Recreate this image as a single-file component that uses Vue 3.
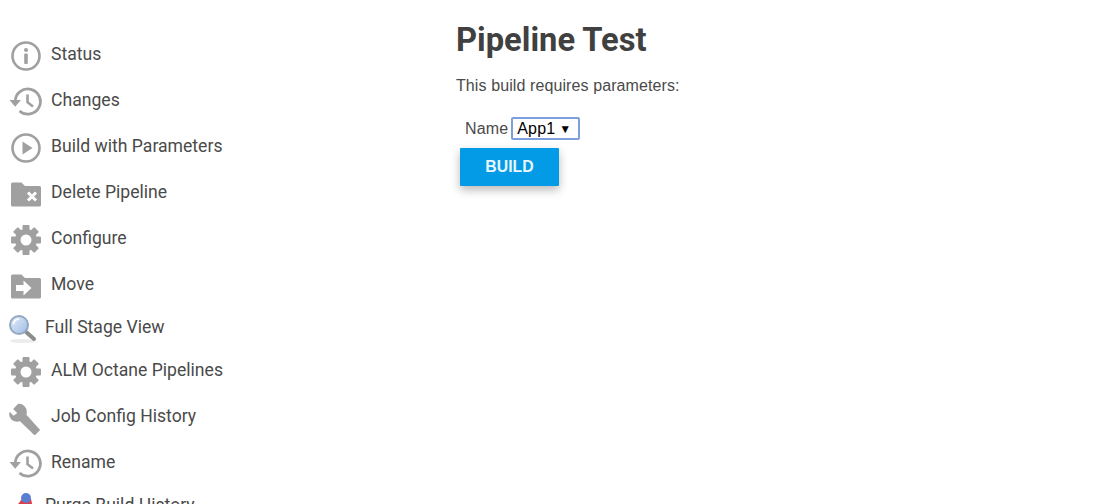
<template>
  <div class="page">
    <!-- sidebar -->
    <nav class="side">
      <a v-for="item in items" :key="item.label" class="task" :class="{ small: item.small }">
        <span class="ico">
          <svg v-if="item.icon === 'info'" viewBox="0 0 30 30" width="30" height="30">
            <circle cx="15" cy="15" r="13.5" fill="none" stroke="#a0a0a0" stroke-width="2.6" />
            <circle cx="15" cy="9" r="2" fill="#a0a0a0" />
            <rect x="13.2" y="12.5" width="3.6" height="10.5" rx="1" fill="#a0a0a0" />
          </svg>
          <svg v-else-if="item.icon === 'history'" class="over" viewBox="0 0 30 30" width="30" height="30">
            <path d="M4.2 14.5 A12.6 12.6 0 1 1 8.5 24" fill="none" stroke="#a0a0a0" stroke-width="2.8" />
            <path d="M-1.5 13 H10 L4.2 19.8 Z" fill="#a0a0a0" />
            <path d="M16.5 7.5 V15.2 L22 19.5" fill="none" stroke="#a0a0a0" stroke-width="2.6" />
          </svg>
          <svg v-else-if="item.icon === 'play'" viewBox="0 0 30 30" width="30" height="30">
            <circle cx="15" cy="15" r="13.5" fill="none" stroke="#a0a0a0" stroke-width="2.6" />
            <path d="M11.5 8.5 L21.5 15 L11.5 21.5 Z" fill="#a0a0a0" />
          </svg>
          <svg v-else-if="item.icon === 'folderx'" viewBox="0 0 30 30" width="30" height="30">
            <path d="M0 5 Q0 3.5 1.5 3.5 H10.5 L14 7 H28.5 Q30 7 30 8.5 V26 Q30 27.5 28.5 27.5 H1.5 Q0 27.5 0 26 Z" fill="#a0a0a0" />
            <path d="M17 13.5 L25 21.5 M25 13.5 L17 21.5" stroke="#fff" stroke-width="3" />
          </svg>
          <svg v-else-if="item.icon === 'folderarrow'" viewBox="0 0 30 30" width="30" height="30">
            <path d="M0 5 Q0 3.5 1.5 3.5 H10.5 L14 7 H28.5 Q30 7 30 8.5 V26 Q30 27.5 28.5 27.5 H1.5 Q0 27.5 0 26 Z" fill="#a0a0a0" />
            <path d="M5 14 H12.5 V9.5 L20.5 17 L12.5 24.5 V20 H5 Z" fill="#fff" />
          </svg>
          <svg v-else-if="item.icon === 'gear'" viewBox="0 0 30 30" width="30" height="30">
            <circle cx="15" cy="15" r="11" fill="#a0a0a0" />
            <rect v-for="a in [0, 45, 90, 135]" :key="a" x="11.5" y="0" width="7" height="30" rx="1" fill="#a0a0a0" :transform="`rotate(${a} 15 15)`" />
            <circle cx="15" cy="15" r="5.5" fill="#fff" />
          </svg>
          <svg v-else-if="item.icon === 'wrench'" class="wrench" viewBox="0 -1 36 36" width="33" height="33">
            <path d="M10 1 L4.5 6.5 L9 11 L5 14 L0.8 9.5 Q-1 15 3 18.5 Q7 21.5 12 20 L28 35.5 L34 29.5 L19 13 Q20.5 7 17 3.5 Q14 0.5 10 1 Z" fill="#a0a0a0" />
          </svg>
          <svg v-else-if="item.icon === 'search'" class="over" viewBox="0 0 30 30" width="30" height="30">
            <defs>
              <linearGradient id="lens" x1="0" y1="0" x2="1" y2="1">
                <stop offset="0" stop-color="#e4eefa" />
                <stop offset="1" stop-color="#9dbce4" />
              </linearGradient>
            </defs>
            <ellipse cx="14" cy="27" rx="13" ry="2" fill="#ececec" />
            <path d="M16 17 L25 25" stroke="#8c8c8c" stroke-width="4" stroke-linecap="round" />
            <circle cx="10" cy="11" r="9" fill="url(#lens)" stroke="#93a8c2" stroke-width="2" />
            <path d="M4.5 10 A6 6 0 0 1 10 5" fill="none" stroke="#fff" stroke-width="1.6" />
          </svg>
          <svg v-else class="over" viewBox="0 0 30 30" width="30" height="30">
            <path d="M6 16 L13 7 H22 L24 16 Z" fill="#dc3f4c" />
            <ellipse cx="17" cy="6" rx="5" ry="5" fill="#5b7fd0" />
          </svg>
        </span>
        <span class="label">{{ item.label }}</span>
      </a>
    </nav>

    <main class="main">
      <h1>Pipeline Test</h1>
      <p>This build requires parameters:</p>
      <div class="param">
        <label>Name</label>
        <span class="select">App1 <i>▼</i></span>
      </div>
      <button class="build" type="button">BUILD</button>
    </main>
  </div>
</template>

<script setup>
const items = [
  { label: 'Status', icon: 'info' },
  { label: 'Changes', icon: 'history' },
  { label: 'Build with Parameters', icon: 'play' },
  { label: 'Delete Pipeline', icon: 'folderx' },
  { label: 'Configure', icon: 'gear' },
  { label: 'Move', icon: 'folderarrow' },
  { label: 'Full Stage View', icon: 'search', small: true },
  { label: 'ALM Octane Pipelines', icon: 'gear' },
  { label: 'Job Config History', icon: 'wrench' },
  { label: 'Rename', icon: 'history' },
  { label: 'Purge Build History', icon: 'purge', small: true }
]
</script>

<style>
html, body {
  margin: 0;
  height: 100%;
  overflow: hidden;
  background: #fff;
}
</style>

<style scoped>
.page {
  display: flex;
  height: 504px;
  overflow: hidden;
  font-family: Roboto, "Liberation Sans", sans-serif;
  color: #4a4a4a;
}

.side {
  width: 456px;
  flex: none;
  padding: 33px 0 0 11px;
  box-sizing: border-box;
}

.task {
  display: flex;
  align-items: center;
  height: 46px;
  font-size: 17.6px;
}

.task .ico {
  width: 40px;
  height: 30px;
  flex: none;
  display: flex;
  align-items: center;
}

.over {
  overflow: visible;
}

.wrench {
  flex: none;
  margin-left: -2px;
}

.task.small {
  height: 40px;
  margin-left: -2px;
}

.task.small .ico {
  width: 36px;
}

.label {
  padding-bottom: 4px;
}

.main {
  flex: 1;
}

h1 {
  margin: 19px 0 0;
  font-size: 32.7px;
  line-height: 42px;
  font-weight: 700;
  color: #404040;
}

p {
  margin: 15px 0 0;
  font-family: "Liberation Sans", Arial, sans-serif;
  font-size: 16px;
  line-height: 20px;
  letter-spacing: 0.1px;
}

.param {
  display: flex;
  align-items: center;
  gap: 3px;
  margin: 21px 0 0 9px;
  font-family: "Liberation Sans", Arial, sans-serif;
  font-size: 16px;
  letter-spacing: 0.15px;
}

.select {
  display: flex;
  align-items: center;
  justify-content: space-between;
  width: 69px;
  height: 23px;
  box-sizing: border-box;
  padding: 0 7px 0 4px;
  border: 2px solid #7d9fdc;
  border-radius: 2px;
  color: #000;
}

.select i {
  font-style: normal;
  font-size: 12px;
}

.build {
  display: block;
  width: 99px;
  height: 38px;
  margin: 8px 0 0 4px;
  padding: 0;
  border: 0;
  border-radius: 1px;
  background: #039be5;
  color: #e8f6fd;
  font-family: "Liberation Sans", Arial, sans-serif;
  font-size: 15.8px;
  font-weight: 700;
  box-shadow: 0 4px 10px rgba(0, 0, 0, 0.28);
}
</style>
